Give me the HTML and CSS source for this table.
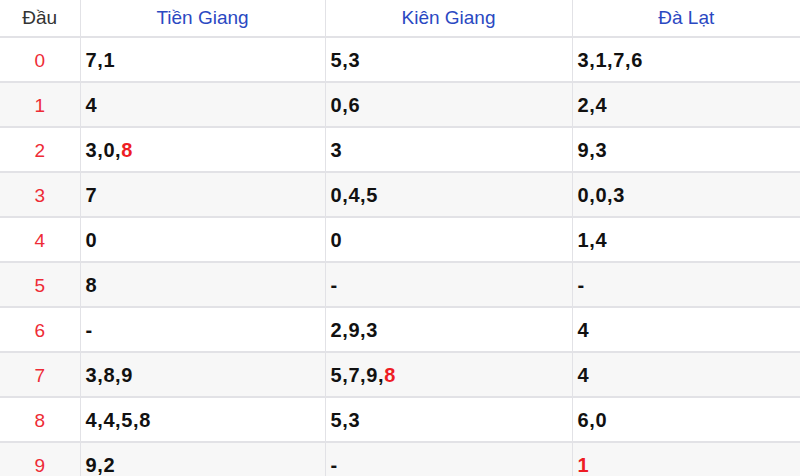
FILE: index.html
```html
<!DOCTYPE html>
<html lang="vi">
<head>
<meta charset="utf-8">
<link rel="stylesheet" href="styles.css">
</head>
<body>
<table class="loto">
  <colgroup>
    <col class="c-head">
    <col class="c-a">
    <col class="c-b">
    <col class="c-c">
  </colgroup>
  <thead>
    <tr>
      <th class="dau">Đầu</th>
      <th>Tiền Giang</th>
      <th>Kiên Giang</th>
      <th>Đà Lạt</th>
    </tr>
  </thead>
  <tbody>
    <tr><td class="num">0</td><td>7,1</td><td>5,3</td><td>3,1,7,6</td></tr>
    <tr><td class="num">1</td><td>4</td><td>0,6</td><td>2,4</td></tr>
    <tr><td class="num">2</td><td>3,0,<span class="hl">8</span></td><td>3</td><td>9,3</td></tr>
    <tr><td class="num">3</td><td>7</td><td>0,4,5</td><td>0,0,3</td></tr>
    <tr><td class="num">4</td><td>0</td><td>0</td><td>1,4</td></tr>
    <tr><td class="num">5</td><td>8</td><td>-</td><td>-</td></tr>
    <tr><td class="num">6</td><td>-</td><td>2,9,3</td><td>4</td></tr>
    <tr><td class="num">7</td><td>3,8,9</td><td>5,7,9,<span class="hl">8</span></td><td>4</td></tr>
    <tr><td class="num">8</td><td>4,4,5,8</td><td>5,3</td><td>6,0</td></tr>
    <tr><td class="num">9</td><td>9,2</td><td>-</td><td><span class="hl">1</span></td></tr>
  </tbody>
</table>
</body>
</html>
```
FILE: styles.css
```css
html, body {
  margin: 0;
  padding: 0;
  background: #ffffff;
}
body {
  font-family: "Liberation Sans", Arial, sans-serif;
  overflow: hidden;
}
.loto {
  width: 800px;
  border-collapse: collapse;
  table-layout: fixed;
}
.c-head { width: 80px; }
.c-a { width: 245px; }
.c-b { width: 247px; }
.c-c { width: 228px; }
.loto th {
  height: 36px;
  padding: 0;
  font-weight: normal;
  font-size: 19px;
  color: #2a48c2;
  text-align: center;
  vertical-align: middle;
  border-right: 1px solid #e2e2e6;
  border-bottom: 2px solid #e2e2e6;
}
.loto th.dau {
  color: #333333;
}
.loto td {
  height: 41px;
  padding: 2px 0 0 5px;
  font-size: 20px;
  font-weight: bold;
  letter-spacing: 0.6px;
  color: #111111;
  vertical-align: middle;
  border-right: 1px solid #e2e2e6;
  border-bottom: 2px solid #e2e2e6;
}
.loto td.num {
  padding: 2px 0 0 0;
  text-align: center;
  font-size: 19px;
  font-weight: normal;
  letter-spacing: 0;
  color: #ee2b36;
}
.loto tbody tr:nth-child(even) td {
  background: #f7f7f7;
}
.loto th:last-child, .loto td:last-child {
  border-right: none;
}
.hl {
  color: #ee1c24;
}
```
